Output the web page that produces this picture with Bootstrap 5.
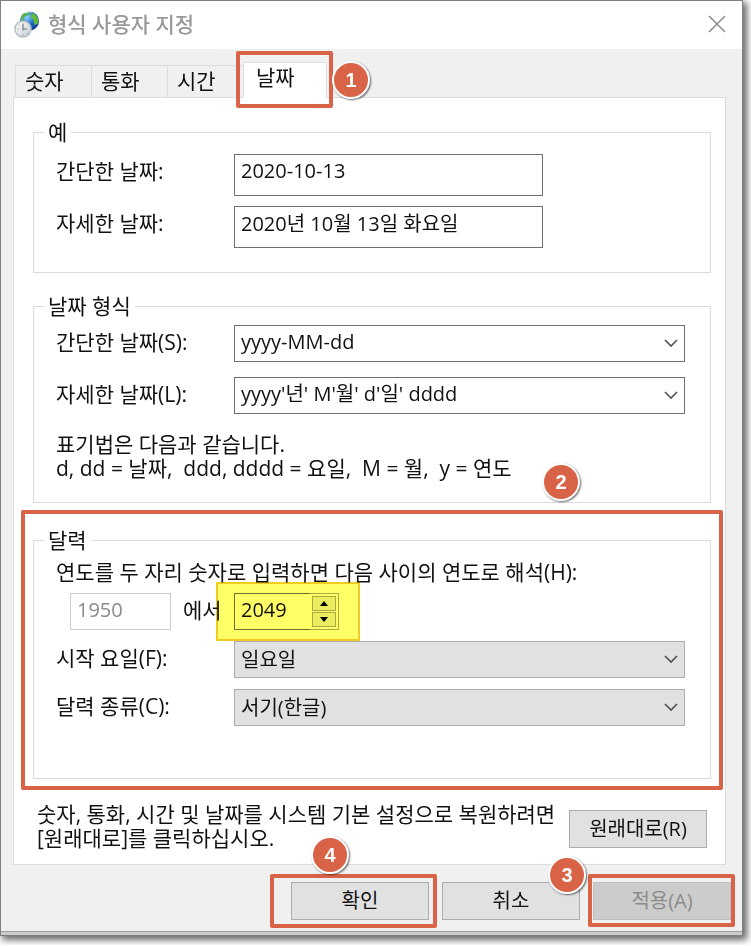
<!DOCTYPE html>
<html lang="ko">
<head>
<meta charset="utf-8">
<meta name="viewport" content="width=device-width, initial-scale=1">
<title>형식 사용자 지정</title>
<link href="https://cdn.jsdelivr.net/npm/bootstrap@5.3.0/dist/css/bootstrap.min.css" rel="stylesheet">
<style>
:root { --note: #d86347; --rule: #dcdcdc; }
body { font-family: "Open Sans", "Noto Sans CJK KR", sans-serif; font-size: 20px; line-height: 24px; color: #111; background: #fff; }
.stage { padding: 0 8px 9px 0; }
.dialog-window { background: #f0f0f0; border: 1px solid #808080; box-shadow: 3px 3px 7px 1px rgba(0,0,0,.6); }
.dialog-base { height: 4px; background: #ccc; border-top: 1px solid #a0a0a0; }
.title-bar { background: #fff; height: 48px; padding: 0 16px 2px 13px; color: #999; }
.title-bar h1 { font-size: 21px; line-height: 24px; margin: 0; }
.close-btn { border: 0; background: none; padding: 0; line-height: 0; }
.sheet { padding: 13px 16px 11px 12px; }
.tab-strip { padding-left: 2px; margin-bottom: -1px; border: 0; }
.tab-strip .nav-link { width: 77px; height: 33px; padding: 1px 0 3px 9px; margin: 0 -1px 0 0; text-align: left; border: 1px solid var(--rule); border-radius: 0; color: #111; font-size: 21px; line-height: 24px; background: #f0f0f0; }
.tab-strip .nav-link.active { width: 84px; height: 36px; padding: 1px 0 7px 12px; background: #fff; border-bottom-color: #fff; color: #111; }
.tab-page { background: #fff; border: 1px solid var(--rule); padding: 22px 14px 14px 19px; }
.group-box { border: 1px solid var(--rule); padding: 0 25px 24px 22px; margin: 0; }
.group-box legend { float: none; width: auto; font-size: 21px; line-height: 24px; padding: 0 4px; margin: 0 0 0 -12px; }
.format-group { margin-top: 21px; padding-bottom: 22px; }
.calendar-area { margin-top: 25px; }
.calendar-group { padding-bottom: 52px; }
.field-row { display: grid; grid-template-columns: 178px 1fr; align-items: start; margin-top: 10px; }
.format-group .field-row { margin-top: 15px; }
.format-group legend + .field-row { margin-top: 7px; }
.field-row label, .hint { font-size: 21px; line-height: 24px; }
.field-row label { padding-top: 5px; }
.format-hint { margin: 18px 0 0; }
.form-control, .form-select { font-size: 20px; line-height: 24px; color: #111; border: 1px solid #707070; border-radius: 0; }
.form-control { background: #fff; padding: 3px 6px 13px; height: 42px; }
.short-field { max-width: 309px; }
.form-select { height: 37px; padding: 3px 32px 7px 6px; background-color: #fff; background-image: url("data:image/svg+xml,%3Csvg xmlns='http://www.w3.org/2000/svg' viewBox='0 0 14 9'%3E%3Cpath d='M1 1l6 6 6-6' fill='none' stroke='%23555' stroke-width='1.7'/%3E%3C/svg%3E"); background-size: 14px 9px; background-position: right 6px center; }
.form-select.flat { padding: 5px 32px 5px 6px; background-color: #e1e1e1; border-color: #adadad; }
.calendar-group .field-row { margin-top: 11px; }
.calendar-group .year-row { grid-template-columns: 164px auto 1fr; padding-left: 14px; margin-top: 9px; }
.year-row .form-control { height: 37px; padding: 3px 6px 8px; }
.year-row .form-control:disabled { width: 101px; color: #8a8a8a; background: #fff; border-color: #ccc; }
.spin-field { width: 105px; height: 37px; border: 1px solid #aaa; background: #fff; }
.spin-field .form-control { width: 76px; margin: -1px 0 -1px -1px; border-right: 0; }
.spin-keys { padding: 2px; gap: 1px; flex: 1; background: #fff; }
.spin-keys button { flex: 1; border: 1px solid #aaa; padding: 0; background: #ececec; line-height: 0; display: flex; align-items: center; justify-content: center; }
.marker { position: absolute; inset: -11px -21px -11px -18px; background: #ffff66; border: 2px solid #f0cc20; mix-blend-mode: multiply; pointer-events: none; }
.frame { position: absolute; border: 4px solid var(--note); border-radius: 2px; pointer-events: none; }
.frame-tab { inset: -11px -7px -10px -7px; }
.frame-group { inset: -18px -12px -11px -12px; }
.frame-ok { inset: -8px -8px -8px -21px; }
.frame-apply { inset: -8px -4px -7px -5px; }
.step { position: absolute; width: 38px; height: 38px; border: 2px solid #fff; border-radius: 50%; background: var(--note); color: #fff; font: bold 20px/34px "Liberation Sans", Arial, sans-serif; text-align: center; box-shadow: 1px 1px 2px rgba(0,0,0,.6); z-index: 2; }
.step-1 { left: 89px; top: -1px; }
.step-2 { right: 131px; top: -65px; }
.step-3 { left: -45px; top: -26px; }
.step-4 { left: 20px; top: -46px; }
.dlg-btn { font-size: 20px; line-height: 24px; padding: 6px 0; width: 138px; border: 1px solid #adadad; border-radius: 0; background: #e1e1e1; color: #111; }
.dlg-btn:disabled { background: #ccc; border-color: #bfbfbf; color: #8b8b8b; opacity: 1; }
.reset-row { margin-top: 23px; }
.reset-text { font-size: 21px; line-height: 24px; white-space: nowrap; }
.actions { padding-top: 17px; margin-right: -5px; gap: 13px; }
</style>
<script src="https://cdn.jsdelivr.net/npm/bootstrap@5.3.0/dist/js/bootstrap.bundle.min.js"></script>
</head>
<body>
<div class="stage">
<main class="dialog-window">
  <header class="title-bar d-flex align-items-center">
    <svg class="me-2" width="26" height="28" viewBox="0 0 26 28" aria-hidden="true">
      <defs>
        <radialGradient id="sea" cx=".35" cy=".3" r=".8"><stop offset="0" stop-color="#8fd4ff"/><stop offset=".5" stop-color="#256fcb"/><stop offset="1" stop-color="#0c2f86"/></radialGradient>
        <linearGradient id="face" x2="1" y2="1"><stop offset="0" stop-color="#fff"/><stop offset="1" stop-color="#c4cdd2"/></linearGradient>
      </defs>
      <circle cx="15.500" cy="11" r="9.500" fill="url(#sea)"/>
      <path d="M8 5q4-4 8-3l-2 3-4 2-1 4-3-1z" fill="#55b548"/>
      <path d="M18 3q5 1 6.500 7l-1 4-3 1-1-5-3-3z" fill="#63b93e"/>
      <path d="M11 3q4-2 7-1" stroke="#d9f2ff" fill="none"/>
      <circle cx="9" cy="19" r="8" fill="url(#face)" stroke="#b4bdc2" stroke-width="1.500"/>
      <path d="M9 13.500V19h4M9 19v1.500" fill="none" stroke="#6b7c85" stroke-width="1.200"/>
      <path d="M3 19h1.500M9 24v1.500M4.500 14.500l1 1M13 23l1 1" stroke="#98a3a8"/>
    </svg>
    <h1>형식 사용자 지정</h1>
    <button class="close-btn ms-auto" type="button" aria-label="닫기"><svg width="18" height="18" viewBox="0 0 18 18"><path d="M1 1l16 16M17 1L1 17" stroke="#8a8a8a" stroke-width="1.500"/></svg></button>
  </header>

  <div class="sheet">
    <div class="nav nav-tabs tab-strip align-items-end flex-nowrap" role="tablist">
      <button class="nav-link" type="button" role="tab">숫자</button>
      <button class="nav-link" type="button" role="tab">통화</button>
      <button class="nav-link" type="button" role="tab">시간</button>
      <div class="position-relative">
        <button class="nav-link active" type="button" role="tab" aria-selected="true">날짜</button>
        <span class="frame frame-tab"></span>
        <span class="step step-1">1</span>
      </div>
    </div>

    <div class="tab-page">
      <fieldset class="group-box">
        <legend>예</legend>
        <div class="field-row">
          <label for="shortSample">간단한 날짜:</label>
          <input id="shortSample" class="form-control short-field" value="2020-10-13" readonly>
        </div>
        <div class="field-row">
          <label for="longSample">자세한 날짜:</label>
          <input id="longSample" class="form-control short-field" value="2020년 10월 13일 화요일" readonly>
        </div>
      </fieldset>

      <fieldset class="group-box format-group">
        <legend>날짜 형식</legend>
        <div class="field-row">
          <label for="shortFormat">간단한 날짜(S):</label>
          <select id="shortFormat" class="form-select"><option>yyyy-MM-dd</option></select>
        </div>
        <div class="field-row">
          <label for="longFormat">자세한 날짜(L):</label>
          <select id="longFormat" class="form-select"><option>yyyy'년' M'월' d'일' dddd</option></select>
        </div>
        <p class="hint format-hint">표기법은 다음과 같습니다.<br>d, dd = 날짜,&nbsp; ddd, dddd = 요일,&nbsp; M = 월,&nbsp; y = 연도</p>
      </fieldset>

      <div class="position-relative calendar-area">
        <fieldset class="group-box calendar-group">
          <legend>달력</legend>
          <label class="hint d-block pt-2" for="yearTo">연도를 두 자리 숫자로 입력하면 다음 사이의 연도로 해석(H):</label>
          <div class="field-row year-row">
            <div class="d-flex">
              <input class="form-control" value="1950" aria-label="시작 연도" disabled>
              <label class="ms-2 ps-1 text-nowrap" for="yearTo">에서</label>
            </div>
            <div class="position-relative">
              <div class="spin-field d-flex">
                <input id="yearTo" class="form-control" value="2049">
                <div class="spin-keys d-flex flex-column">
                  <button type="button" aria-label="증가"><svg width="8" height="5" viewBox="0 0 8 5"><path d="M0 5l4-5 4 5z"/></svg></button>
                  <button type="button" aria-label="감소"><svg width="8" height="5" viewBox="0 0 8 5"><path d="M0 0l4 5 4-5z"/></svg></button>
                </div>
              </div>
              <span class="marker"></span>
            </div>
          </div>
          <div class="field-row">
            <label for="firstDay">시작 요일(F):</label>
            <select id="firstDay" class="form-select flat"><option>일요일</option></select>
          </div>
          <div class="field-row">
            <label for="calendarKind">달력 종류(C):</label>
            <select id="calendarKind" class="form-select flat"><option>서기(한글)</option></select>
          </div>
        </fieldset>
        <span class="frame frame-group"></span>
        <span class="step step-2">2</span>
      </div>

      <div class="reset-row d-flex justify-content-between align-items-start ps-1 pe-1">
        <p class="reset-text mb-0">숫자, 통화, 시간 및 날짜를 시스템 기본 설정으로 복원하려면<br>[원래대로]를 클릭하십시오.</p>
        <button class="btn dlg-btn mt-2" type="button">원래대로(R)</button>
      </div>
    </div>

    <footer class="actions d-flex justify-content-end">
      <div class="position-relative">
        <button class="btn dlg-btn" type="button">확인</button>
        <span class="frame frame-ok"></span>
        <span class="step step-4">4</span>
      </div>
      <button class="btn dlg-btn" type="button">취소</button>
      <div class="position-relative">
        <button class="btn dlg-btn" type="button" disabled>적용(A)</button>
        <span class="frame frame-apply"></span>
        <span class="step step-3">3</span>
      </div>
    </footer>
  </div>
  <div class="dialog-base"></div>
</main>
</div>
</body>
</html>
